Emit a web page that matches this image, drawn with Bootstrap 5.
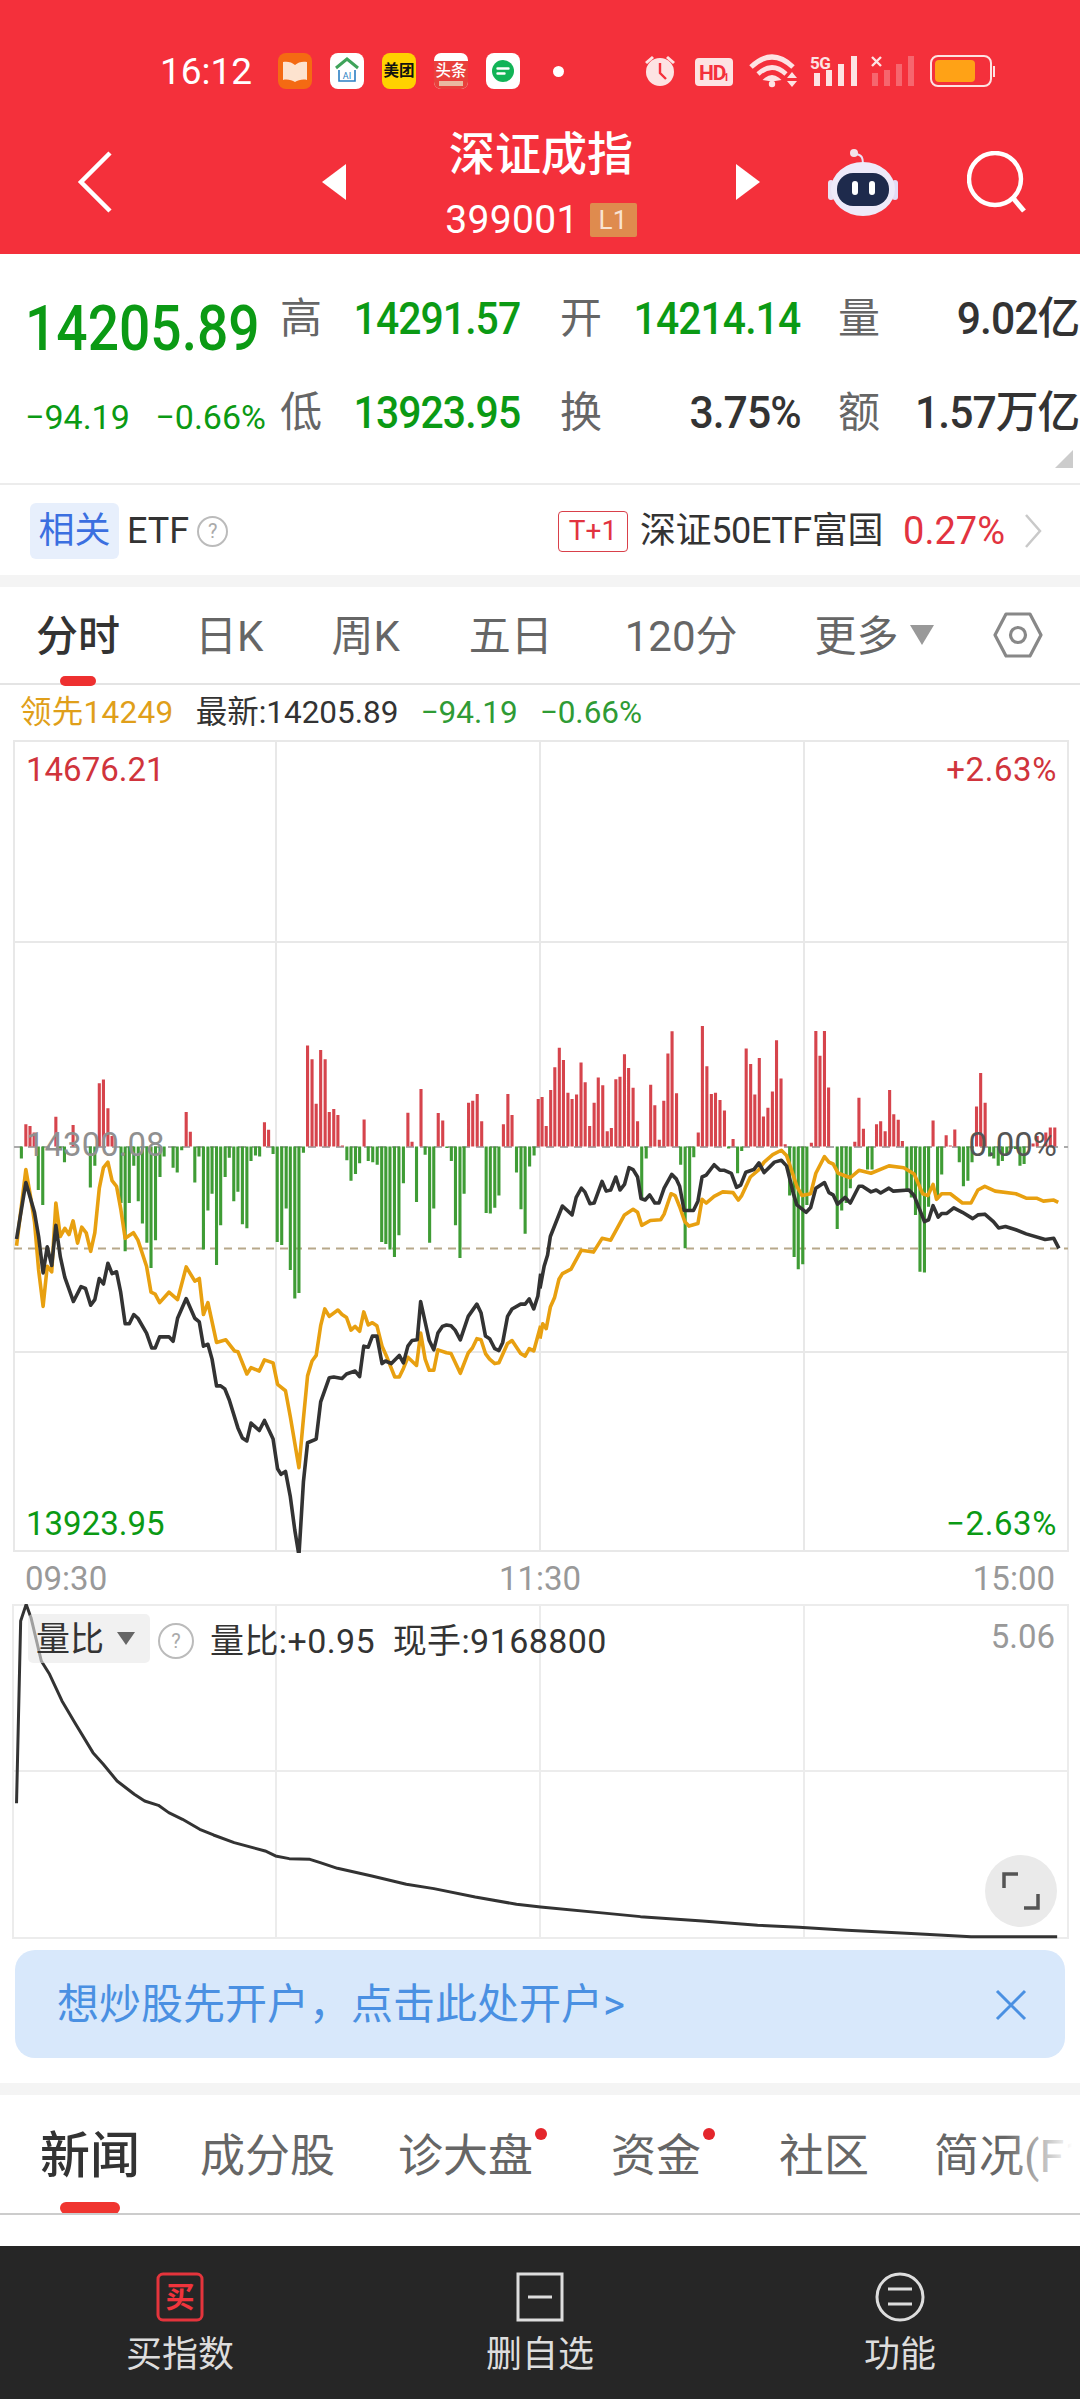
<!DOCTYPE html>
<html lang="zh-CN">
<head>
<meta charset="utf-8">
<title>深证成指</title>
<link href="https://cdn.jsdelivr.net/npm/bootstrap@5.3.0/dist/css/bootstrap.min.css" rel="stylesheet">
<style>
:root{--fnt:Roboto,"Noto Sans CJK SC",sans-serif;--grn:#0b9a14;--rd:#e23340;--hdr:#f4303b}
html,body{margin:0;background:#fff}
body{width:1080px;height:2400px;overflow:hidden;font-family:var(--fnt);color:#333;line-height:1}
.hdr{height:254px;background:var(--hdr);color:#fff}
.sbar{padding:53px 0 0 160px;height:89px}
.sclock{font-size:37px;width:118px}
.appi{width:34px;height:36px;display:block;margin-right:18px;flex:none}
.sdot{width:11px;height:11px;border-radius:50%;background:#fff;margin-left:15px}
.srt{margin-left:auto;margin-right:85px}
.trow{padding-left:77px;margin-top:39px;height:108px}
.ttl{width:390px}
.ttl-name{font-size:46px;font-weight:500;line-height:48px;margin-top:-2px}
.ttl-code{font-size:39px;margin-top:24px;line-height:36px;margin-bottom:-6px;letter-spacing:.3px}
.ttl-l1{background:#df8b4e;color:#f9e3d2;font-size:26px;width:47px;height:34px;margin-left:11px;border-radius:2px;display:inline-flex;align-items:center;justify-content:center}
.ml-robot{margin-left:67px}.ml-srch{margin-left:68px}.ml-tri{margin-left:209px}
.qbox{height:231px;padding-top:18px;border-bottom:2px solid #ececec}
.qrow{height:94px}
.qmain{width:280px}
.qpx{font-size:63px;font-weight:500;color:var(--grn);padding:19px 0 0 25px;white-space:nowrap}
.qpx span{display:inline-block;transform:scaleX(.875);transform-origin:left center}
.qsub{font-size:34px;color:var(--grn);padding:8px 14px 0 25px}
.qcell{width:240px;margin-right:40px}
.qcell.last{margin-right:0;margin-left:-2px}
.qlab{font-size:42px;color:#666;width:42px}
.qval{font-size:44px;font-weight:500;margin-left:auto;white-space:nowrap;letter-spacing:-1px;transform-origin:right center}
.qgreen{color:var(--grn);transform:scaleX(.93)}
.qdark{color:#333;transform:translateX(1px) scaleX(.97)}
.qtri{position:absolute;right:7px;bottom:15px;width:0;height:0;border-left:18px solid transparent;border-bottom:18px solid #ccc}
.erow{height:90px;padding:2px 38px 0 30px}
.echip{background:#e7effc;color:#3b6fe0;font-size:36px;width:89px;height:56px;border-radius:6px;display:flex;align-items:center;justify-content:center}
.etxt{font-size:36px;color:#333}
.ename{letter-spacing:-.4px;margin-left:12px}
.qcirc{width:31px;height:31px;border:2px solid #bbb;border-radius:50%;color:#aaa;font-size:20px;display:flex;align-items:center;justify-content:center}
.tbox{border:1.5px solid #d9404a;color:var(--rd);border-radius:4px;width:70px;height:41px;font-size:28px;display:flex;align-items:center;justify-content:center}
.epct{color:var(--rd);font-size:38px;margin:0 19px 0 20px}
.gband{height:12px;background:#f4f4f4}
.tab1{height:98px;padding:3px 0 0 36px;border-bottom:2px solid #e4e4e4;font-size:42px;color:#666}
.tab1 .on{color:#333;font-weight:500;position:relative}
.tbar{position:absolute;background:#ee3030;border-radius:6px}
.tab1 .tbar{left:24px;bottom:-28px;width:36px;height:10px}
.t1a{margin-left:75px}.t1b{margin-left:68px}.t1c{margin-left:69px}.t1d{margin-left:72px}.t1e{margin-left:77px}.t1f{margin-left:59px;margin-top:-3px}
.triang{display:inline-block;width:0;height:0;border-left:12px solid transparent;border-right:12px solid transparent;border-top:20px solid #999;margin-left:11px;vertical-align:6px}
.ilin{height:55px;padding-left:20px;font-size:31.500px;gap:22px}
.c-or{color:#e09f1a;letter-spacing:.3px}
.c-gr{color:#2f9b35}
.chartw{position:relative;height:813px}
.chartw svg,.chart2 svg{display:block}
.cl{position:absolute;font-size:33px;line-height:32px}
.cl-r{letter-spacing:.6px}
.tlab{height:51px;padding:0 25px;font-size:33px;color:#999}
.chart2{position:relative;height:335px}
.ch-chip{position:absolute;left:28px;top:10px;width:122px;height:49px;background:rgba(232,232,232,.6);border-radius:5px;font-size:34px;padding-left:8px}
.ch-chip .triang{border-left-width:9px;border-right-width:9px;border-top-width:13px;border-top-color:#666;margin-left:13px;vertical-align:5px}
.ch-q{position:absolute;left:158px;top:19px;width:36px;height:36px}
.ch-t{position:absolute;left:210px;top:20px;font-size:34px;white-space:pre;letter-spacing:.4px}
.ch-5{position:absolute;right:25px;top:16px;font-size:33px;color:#999}
.ch-fs{position:absolute;left:985px;top:251px;width:72px;height:72px;border-radius:50%;background:#eaeaea;display:flex;align-items:center;justify-content:center}
.bnr{margin:11px 15px 25px;height:108px;background:#d8e8fb;border-radius:20px;padding:2px 38px 0 42px;font-size:42px;color:#4a90e2}
.tab2{height:120px;border-bottom:2px solid #ccc;padding:4px 0 0 40px;font-size:45px;color:#666;position:relative;overflow:hidden}
.tab2::after{content:"";position:absolute;right:0;top:0;bottom:0;width:75px;background:linear-gradient(90deg,rgba(255,255,255,0),#fff 90%)}
.tab2 .on{font-size:50px;font-weight:500;color:#333}
.tab2 .tbar{left:60px;bottom:-1px;width:60px;height:12px;background:#f03530}
.tdot{position:relative}
.tdot::after{content:"";position:absolute;right:-14px;top:-6px;width:12px;height:12px;border-radius:50%;background:#e4262c}
.m1{margin-left:60px}.m2{margin-left:63px}.m3{margin-left:78px}.m4{margin-left:65px}
.tab2 span{white-space:nowrap}
.spacer{height:31px}
.bbar{height:153px;background:#262626;color:#ddd}
.bitem{padding-top:26px;font-size:36px}
.bitem svg{display:block;margin:0 auto 15px}
.nowrap{white-space:nowrap}
</style>
</head>
<body>

<header class="hdr">
  <div class="sbar d-flex align-items-center">
    <div class="sclock">16:12</div>
    <svg class="appi" viewBox="0 0 34 36"><rect width="34" height="36" rx="8" fill="#f46a13"/><path d="M5 9c4-1 9 0 12 3 3-3 8-4 12-3v18c-4-1-9 0-12 2-3-2-8-3-12-2z" fill="#fde3cf"/></svg>
    <svg class="appi" viewBox="0 0 34 36"><rect width="34" height="36" rx="8" fill="#fff"/><path d="M6 15 17 6l11 9" fill="none" stroke="#3fa35a" stroke-width="3"/><path d="M9 17v11h16V17" fill="none" stroke="#2b7fc4" stroke-width="1.600"/><text x="17" y="26" font-size="9" text-anchor="middle" fill="#2b7fc4" font-family="Roboto,sans-serif">AI</text></svg>
    <svg class="appi" viewBox="0 0 34 36"><rect width="34" height="36" rx="8" fill="#ffd100"/><text x="17" y="23" font-size="15.500" text-anchor="middle" fill="#111" font-weight="700" font-family="'Noto Sans CJK SC',sans-serif">美团</text></svg>
    <svg class="appi" viewBox="0 0 34 36"><rect width="34" height="36" rx="7" fill="#fff"/><path d="M0 8h34v21a7 7 0 0 1-7 7H7a7 7 0 0 1-7-7z" fill="#e8403c"/><text x="17" y="23" font-size="15.500" text-anchor="middle" fill="#fff" font-weight="500" font-family="'Noto Sans CJK SC',sans-serif">头条</text><rect x="5" y="28" width="24" height="5" fill="#e9b9a0"/></svg>
    <svg class="appi" viewBox="0 0 34 36"><rect width="34" height="36" rx="8" fill="#fff"/><circle cx="17" cy="18" r="11" fill="#11b457"/><path d="M11.500 15.500h11M11.500 20.500h7" stroke="#fff" stroke-width="2.400" stroke-linecap="round"/></svg>
    <div class="sdot"></div>
    <svg class="srt" width="351" height="34" viewBox="644 54 351 34">
      <g fill="#fde3e3">
        <circle cx="660" cy="72" r="14"/><path d="M645 62l7-6 2 2-7 6zM675 62l-7-6-2 2 7 6z"/>
        <path d="M660 63v10l6 6" fill="none" stroke="#f4303b" stroke-width="2.400"/>
        <rect x="695" y="58" width="38" height="28" rx="4"/>
        <g fill="none" stroke="#fde3e3"><path d="M751 67Q772 47 793 67" stroke-width="5"/><path d="M758 74Q772 61 786 74" stroke-width="4.600"/></g>
        <path d="M766 79Q772 74 778 79L772 80z" stroke="#fde3e3" stroke-width="3"/>
        <circle cx="772" cy="84" r="3.200"/><path d="M787 78h10l-5-6zM787 81h10l-5 6z"/>
        <rect x="814" y="73" width="6" height="13"/><rect x="826" y="70" width="6" height="16"/><rect x="838" y="64" width="6" height="22"/><rect x="851" y="56" width="6" height="30"/>
        <g opacity=".3"><rect x="872" y="73" width="6" height="13"/><rect x="884" y="70" width="6" height="16"/><rect x="896" y="64" width="6" height="22"/><rect x="908" y="56" width="6" height="30"/></g>
        <path d="M872 57l9 9M881 57l-9 9" stroke="#fde3e3" stroke-width="2.400"/>
        <rect x="931" y="56" width="60" height="30" rx="7" fill="none" stroke="#fde3e3" stroke-width="2"/><rect x="993" y="66" width="2.500" height="11"/>
      </g>
      <rect x="935" y="60" width="40" height="22" rx="4" fill="#ffa216"/>
      <text x="699" y="80" font-size="21" font-weight="700" fill="#f4303b" font-family="Roboto,sans-serif" letter-spacing="-1">HD</text><text x="723" y="81" font-size="11" font-weight="700" fill="#f4303b" font-family="Roboto,sans-serif">1</text>
      <text x="810" y="69" font-size="17" font-weight="700" fill="#fde3e3" font-family="Roboto,sans-serif" letter-spacing="-.6">5G</text>
    </svg>
  </div>
  <div class="trow d-flex align-items-center">
    <svg width="36" height="64" viewBox="0 0 36 64"><path d="M33 3 4 32l29 29" fill="none" stroke="#fff" stroke-width="4.500"/></svg>
    <svg class="ml-tri" width="24" height="36" viewBox="0 0 24 36"><path d="M24 0v36L0 18z" fill="#fff"/></svg>
    <div class="ttl text-center">
      <div class="ttl-name">深证成指</div>
      <div class="ttl-code d-flex justify-content-center align-items-center">399001<span class="ttl-l1">L1</span></div>
    </div>
    <svg width="24" height="36" viewBox="0 0 24 36"><path d="M0 0v36l24-18z" fill="#fff"/></svg>
    <svg class="ml-robot" width="72" height="68" viewBox="0 0 72 68"><path d="M36 16c0-6-1-9-7-10" fill="none" stroke="#eadff5" stroke-width="2"/><circle cx="27" cy="5" r="4" fill="#f3e3ea"/><rect x="1" y="32" width="6" height="20" rx="3" fill="#e9e2f5"/><rect x="65" y="32" width="6" height="20" rx="3" fill="#e2dcf5"/><ellipse cx="36" cy="41" rx="32" ry="27" fill="#eeeaf9"/><rect x="10" y="25" width="52" height="33" rx="16" fill="#1e2a4c"/><rect x="25" y="33" width="6" height="14" rx="3" fill="#fff"/><rect x="42" y="33" width="6" height="14" rx="3" fill="#fff"/></svg>
    <svg class="ml-srch" width="62" height="62" viewBox="0 0 62 62"><circle cx="28" cy="28" r="26" fill="none" stroke="#fff" stroke-width="4.400"/><path d="M46 47l11 13" stroke="#fff" stroke-width="5"/></svg>
  </div>
</header>

<section class="qbox position-relative">
  <div class="qrow d-flex align-items-center">
    <div class="qmain qpx"><span>14205.89</span></div>
    <div class="qcell d-flex align-items-center"><span class="qlab">高</span><span class="qval qgreen">14291.57</span></div>
    <div class="qcell d-flex align-items-center"><span class="qlab">开</span><span class="qval qgreen">14214.14</span></div>
    <div class="qcell last d-flex align-items-center"><span class="qlab">量</span><span class="qval qdark">9.02亿</span></div>
  </div>
  <div class="qrow d-flex align-items-center">
    <div class="qmain qsub d-flex"><span>−94.19</span><span class="ms-auto">−0.66%</span></div>
    <div class="qcell d-flex align-items-center"><span class="qlab">低</span><span class="qval qgreen">13923.95</span></div>
    <div class="qcell d-flex align-items-center"><span class="qlab">换</span><span class="qval qdark">3.75%</span></div>
    <div class="qcell last d-flex align-items-center"><span class="qlab">额</span><span class="qval qdark">1.57万亿</span></div>
  </div>
  <div class="qtri"></div>
</section>

<section class="erow d-flex align-items-center">
  <div class="echip">相关</div>
  <div class="etxt ms-2">ETF</div>
  <div class="qcirc ms-2">?</div>
  <div class="tbox ms-auto">T+1</div>
  <div class="etxt ename nowrap">深证50ETF富国</div>
  <div class="epct">0.27%</div>
  <svg width="18" height="36" viewBox="0 0 18 36"><path d="M2 2l14 16L2 34" fill="none" stroke="#c9c9c9" stroke-width="2.500"/></svg>
</section>
<div class="gband"></div>

<nav class="tab1 d-flex align-items-center">
  <span class="on">分时<span class="tbar"></span></span>
  <span class="t1a">日K</span><span class="t1b">周K</span><span class="t1c">五日</span><span class="t1d">120分</span>
  <span class="t1e nowrap">更多<span class="triang"></span></span>
  <svg class="t1f" width="50" height="46" viewBox="0 0 50 46"><path d="M13 2h24l11 21-11 21H13L2 23z" fill="none" stroke="#888" stroke-width="3.200" stroke-linejoin="round"/><circle cx="25" cy="23" r="7.500" fill="none" stroke="#888" stroke-width="3.200"/></svg>
</nav>

<div class="ilin d-flex align-items-center nowrap"><span class="c-or">领先14249</span><span>最新:14205.89</span><span class="c-gr">−94.19</span><span class="c-gr">−0.66%</span></div>

<div class="chartw">
  <svg width="1080" height="813" viewBox="0 740 1080 813">
    <g stroke="#e8e8e8" stroke-width="2" fill="none">
      <rect x="14" y="741" width="1054" height="810"/>
      <path d="M276 741V1551M540 741V1551M804 741V1551M14 942H1068M14 1352H1068"/>
    </g>
    <path d="M14 1147H1068" stroke="#aaa" stroke-width="2" stroke-dasharray="8 6"/>
    <path d="M14 1248.500H1068" stroke="#b7a88a" stroke-width="1.800" stroke-dasharray="8 6"/>
    <g transform="translate(0 980) scale(.3448 .3717)" fill="none" stroke-width="9">
      <path stroke="#d6444c" d="M75 448V388M87 448V393M99 448V410M162 448V368M212 448V390M288 448V278M300 448V268M313 448V345M325 448V420M540 448V355M552 448V408M767 448V383M779 448V403M892 448V176M905 448V213M917 448V333M930 448V188M943 448V213M955 448V355M968 448V347M980 448V363M993 448V445M1056 448V375M1183 448V357M1195 448V435M1221 448V293M1271 448V358M1284 448V378M1359 448V330M1371 448V325M1384 448V307M1397 448V380M1460 448V388M1473 448V307M1485 448V363M1561 448V320"/>
      <path stroke="#3f9c35" d="M62 448V480M111 448V565M124 448V605M174 448V455M187 448V490M262 448V558M275 448V500M351 448V600M363 448V730M375 448V600M388 448V500M401 448V595M413 448V655M426 448V707M438 448V775M451 448V700M464 448V530M476 448V475M502 448V505M514 448V518M527 448V458M565 448V545M577 448V475M590 448V725M603 448V620M615 448V575M628 448V767M640 448V660M653 448V530M665 448V478M678 448V595M690 448V570M703 448V657M716 448V668M728 448V487M741 448V472M753 448V475M792 448V468M804 448V705M817 448V713M830 448V615M842 448V780M855 448V857M867 448V842M880 448V465M1006 448V485M1018 448V540M1031 448V522M1043 448V493M1068 448V487M1081 448V490M1094 448V497M1107 448V705M1119 448V710M1131 448V725M1144 448V745M1157 448V687M1170 448V547M1208 448V597M1233 448V470M1246 448V707M1258 448V615M1296 448V452M1309 448V487M1321 448V660M1334 448V748M1346 448V575M1410 448V627M1422 448V628M1435 448V613M1447 448V580M1498 448V518M1511 448V617M1523 448V683M1536 448V502M1549 448V472"/>
    </g>
    <g transform="translate(540 980) scale(.3448 .3717)" fill="none" stroke-width="9">
      <path stroke="#d6444c" d="M6 448V315M18 448V393M31 448V296M43 448V235M56 448V182M68 448V215M81 448V303M93 448V320M106 448V308M119 448V222M131 448V275M144 448V393M157 448V330M169 448V262M182 448V283M195 448V407M207 448V398M220 448V267M232 448V260M245 448V200M257 448V237M270 448V290M283 448V380M321 448V282M333 448V337M346 448V430M359 448V325M371 448V198M383 448V138M396 448V305M459 448V410M471 448V124M484 448V232M497 448V307M509 448V303M522 448V323M535 448V351M560 448V428M598 448V184M611 448V226M623 448V308M636 448V210M648 448V367M661 448V344M674 448V300M686 448V162M699 448V265M711 448V442M787 448V438M800 448V137M812 448V204M825 448V137M837 448V289M913 448V435M925 448V317M938 448V400M976 448V388M988 448V380M1001 448V407M1014 448V296M1026 448V361M1039 448V376M1051 448V433M1140 448V378M1178 448V418M1190 448V445M1203 448V402M1266 448V340M1278 448V250M1291 448V330M1430 448V440M1442 448V420M1467 448V410M1480 448V397M1493 448V397"/>
      <path stroke="#3f9c35" d="M295 448V590M308 448V480M408 448V497M421 448V722M434 448V620M446 448V477M547 448V453M573 448V520M585 448V460M724 448V580M737 448V745M749 448V778M762 448V765M774 448V605M862 448V670M875 448V620M888 448V600M900 448V560M950 448V510M963 448V510M1064 448V565M1077 448V585M1089 448V632M1102 448V785M1115 448V787M1127 448V610M1153 448V590M1165 448V523M1216 448V490M1228 448V555M1241 448V540M1253 448V490M1304 448V475M1316 448V480M1329 448V500M1341 448V487M1354 448V470M1366 448V455M1379 448V455M1392 448V500M1404 448V495"/>
    </g>
    <g fill="none" stroke-width="3.600" stroke-linejoin="round">
      <g transform="translate(0 980) scale(.3448 .3717)">
        <polyline vector-effect="non-scaling-stroke" stroke="#e8a010" points="48,715 75,510 88,580 100,650 112,780 125,878 137,770 150,785 162,600 175,690 188,668 200,685 212,648 225,708 237,665 250,680 263,730 275,680 288,560 300,505 313,490 325,540 338,555 350,615 363,695 387,680 400,700 425,770 438,840 450,845 463,868 490,840 515,860 540,772 565,810 578,803 590,900 603,868 628,975 655,968 680,998 690,1000 716,1060 728,1043 752,1052 767,1022 792,1030 805,1088 828,1105 842,1175 867,1312 880,1180 892,1065 905,1025 917,1010 930,930 942,885 955,905 980,888 992,900 1005,908 1018,942 1030,932 1043,945 1055,893 1068,928 1080,922 1093,930 1108,985 1120,1010 1145,1068 1158,1068 1170,1045 1183,1015 1208,1037 1220,950 1233,1020 1245,1050 1258,1050 1270,995 1295,1003 1308,1005 1335,1058 1358,1003 1370,990 1383,965 1395,968 1408,1005 1420,1020 1435,1032 1447,1030 1472,978 1485,970 1510,1005 1523,1012 1535,992 1548,998 1568,930"/>
        <polyline vector-effect="non-scaling-stroke" stroke="#333" points="48,697 75,545 100,625 112,690 125,788 137,718 150,768 162,660 175,745 188,800 213,865 235,825 248,830 263,875 275,860 288,803 300,818 313,762 325,790 338,785 350,840 363,925 375,925 388,900 400,910 425,950 440,990 450,990 463,960 490,960 502,972 515,910 540,857 565,910 578,920 590,985 603,980 615,1020 628,1092 640,1092 652,1100 665,1130 690,1205 703,1232 716,1240 728,1192 752,1212 767,1185 792,1235 805,1315 815,1330 828,1322 842,1390 855,1480 867,1548 880,1350 892,1245 917,1235 930,1135 955,1070 968,1068 992,1072 1005,1060 1030,1052 1043,1067 1055,985 1068,988 1080,958 1093,958 1108,1032 1118,1025 1135,1032 1158,1010 1170,1030 1183,985 1195,970 1210,968 1220,865 1245,970 1258,995 1270,950 1283,932 1295,928 1308,930 1320,942 1335,968 1358,905 1383,872 1395,895 1408,958 1420,965 1435,992 1447,997 1458,975 1472,905 1485,885 1510,872 1523,872 1535,858 1548,885 1560,850 1568,790"/>
      </g>
      <g transform="translate(540 980) scale(.3448 .3717)">
        <polyline vector-effect="non-scaling-stroke" stroke="#e8a010" points="0,965 8,925 18,938 30,880 42,855 55,805 65,790 90,778 120,727 155,732 180,695 205,700 245,632 270,617 283,625 295,660 320,647 350,645 360,630 380,575 392,580 405,610 420,650 432,662 458,655 470,590 482,600 505,582 530,570 560,572 575,592 585,580 610,530 635,510 650,490 675,470 700,458 715,472 745,555 760,580 785,575 800,520 825,475 838,490 850,495 865,520 900,532 925,512 960,520 1012,500 1055,505 1085,522 1110,575 1125,580 1140,550 1150,590 1165,575 1190,575 1225,600 1250,600 1270,565 1290,555 1320,568 1380,575 1410,587 1440,587 1460,595 1490,592 1503,598"/>
        <polyline vector-effect="non-scaling-stroke" stroke="#333" points="0,830 12,770 22,740 30,690 65,608 93,632 105,585 120,560 130,570 145,602 157,600 180,542 192,568 205,565 220,530 232,565 245,550 258,505 270,510 283,530 293,588 305,592 318,578 333,600 345,600 360,560 382,523 395,535 405,555 418,620 445,620 458,595 470,530 482,525 505,497 522,512 535,512 555,520 570,558 582,552 597,517 620,510 635,492 650,518 680,490 700,485 715,500 735,575 745,605 772,625 785,612 800,560 825,545 838,572 850,578 863,603 885,585 900,600 925,555 935,555 960,570 975,565 988,573 1012,560 1025,568 1070,565 1085,580 1115,650 1127,645 1140,607 1155,638 1165,628 1180,628 1200,613 1225,625 1255,642 1270,632 1290,630 1315,650 1330,667 1350,663 1380,672 1410,683 1465,698 1490,695 1505,722"/>
      </g>
    </g>
  </svg>
  <span class="cl" style="left:26px;top:14px;color:#d0343c">14676.21</span>
  <span class="cl cl-r" style="right:23px;top:14px;color:#d0343c">+2.63%</span>
  <span class="cl" style="left:26px;top:389px;color:#909090">14300.08</span>
  <span class="cl" style="right:23px;top:389px;color:#555">0.00%</span>
  <span class="cl" style="left:26px;top:768px;color:var(--grn)">13923.95</span>
  <span class="cl cl-r" style="right:23px;top:768px;color:var(--grn)">−2.63%</span>
</div>

<div class="tlab d-flex align-items-center justify-content-between"><span>09:30</span><span>11:30</span><span>15:00</span></div>

<div class="chart2">
  <svg width="1080" height="335" viewBox="0 1603 1080 335">
    <g stroke="#ececec" stroke-width="2" fill="none">
      <rect x="13" y="1604" width="1055" height="333"/>
      <path d="M276 1604V1937M540 1604V1937M804 1604V1937M13 1770H1068"/>
    </g>
    <g transform="translate(0 1560) scale(.6887 .3333)">
      <polyline vector-effect="non-scaling-stroke" fill="none" stroke="#333" stroke-width="3" stroke-linejoin="round" points="24,727 30,180 38,130 45,170 60,300 72,340 90,420 110,490 135,575 150,610 170,660 195,700 210,720 230,733 245,755 265,775 290,805 310,822 340,845 385,870 400,885 420,893 450,895 465,905 490,922 540,945 590,970 630,983 690,1008 750,1030 785,1038 870,1055 930,1067 1020,1080 1100,1093 1160,1099 1230,1108 1330,1118 1410,1127 1535,1127"/>
    </g>
  </svg>
  <div class="ch-chip d-flex align-items-center">量比<span class="triang"></span></div>
  <div class="ch-q qcirc">?</div>
  <div class="ch-t">量比:+0.95  现手:9168800</div>
  <div class="ch-5">5.06</div>
  <div class="ch-fs"><svg width="38" height="38" viewBox="0 0 38 38"><path d="M2 16V2h14M36 22v14H22" fill="none" stroke="#555" stroke-width="3.500"/></svg></div>
</div>

<div class="bnr d-flex align-items-center justify-content-between">
  <span class="nowrap">想炒股先开户，点击此处开户&gt;</span>
  <svg width="32" height="32" viewBox="0 0 32 32"><path d="M2 2l28 28M30 2 2 30" stroke="#4a90e2" stroke-width="3"/></svg>
</div>
<div class="gband"></div>

<nav class="tab2 d-flex align-items-center">
  <span class="on">新闻</span>
  <span class="m1">成分股</span>
  <span class="m2 tdot">诊大盘</span>
  <span class="m3 tdot">资金</span>
  <span class="m3">社区</span>
  <span class="m4">简况(F10)</span>
  <span class="tbar"></span>
</nav>
<div class="spacer"></div>

<footer class="bbar row g-0 text-center">
  <div class="col-4 bitem">
    <svg width="48" height="50" viewBox="0 0 48 50"><rect x="2" y="2" width="44" height="46" rx="5" fill="none" stroke="#e4343c" stroke-width="3"/><text x="24" y="36" font-size="29" font-weight="700" text-anchor="middle" fill="#f0343c" font-family="'Noto Sans CJK SC',sans-serif">买</text></svg>
    买指数
  </div>
  <div class="col-4 bitem">
    <svg width="48" height="50" viewBox="0 0 48 50"><rect x="2" y="2" width="44" height="46" fill="none" stroke="#ddd" stroke-width="3"/><path d="M12 25h24" stroke="#ddd" stroke-width="3"/></svg>
    删自选
  </div>
  <div class="col-4 bitem">
    <svg width="50" height="50" viewBox="0 0 50 50"><circle cx="25" cy="25" r="23" fill="none" stroke="#ddd" stroke-width="3"/><path d="M13 17h24M13 32h24" stroke="#ddd" stroke-width="3"/></svg>
    功能
  </div>
</footer>
</body>
</html>
